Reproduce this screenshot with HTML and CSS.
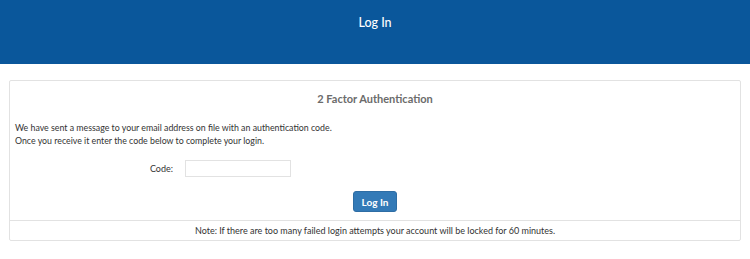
FILE: index.html
```html
<!DOCTYPE html>
<html lang="en">
<head>
    <meta charset="UTF-8">
    <title>Log In</title>
    <link rel="stylesheet" href="styles.css">
</head>
<body>
    <!-- Top Bar -->
    <header class="top-bar">
        <h1>Log In</h1>
    </header>

    <!-- 2FA Panel -->
    <main class="auth-panel">
        <h2>2 Factor Authentication</h2>
        <p class="intro">
            We have sent a message to your email address on file with an authentication code.<br>
            Once you receive it enter the code below to complete your login.
        </p>
        <form class="code-form" onsubmit="return false">
            <div class="code-row">
                <label for="code">Code:</label>
                <input type="text" id="code">
            </div>
            <div class="submit-row">
                <button type="submit">Log In</button>
            </div>
        </form>
        <div class="note">Note: If there are too many failed login attempts your account will be locked for 60 minutes.</div>
    </main>
</body>
</html>
```

FILE: styles.css
```css
:root {
    --color-brand: #0a579b;
    --color-button: #337ab7;
    --color-border: #e2e2e2;
    --color-text: #333;
    --color-heading: #6b6b6b;
}

body {
    margin: 0;
    font-family: Lato, "Open Sans", sans-serif;
    color: var(--color-text);
    background: #fff;
}

/* Top Bar */
.top-bar {
    background: var(--color-brand);
    height: 64px;
    display: flex;
    justify-content: center;
    padding-top: 14px;
    box-sizing: border-box;
}

.top-bar h1 {
    margin: 0;
    color: #fff;
    font-size: 12.5px;
    font-weight: 500;
    line-height: 18px;
}

/* 2FA Panel */
.auth-panel {
    margin: 16px 9px 0;
    border: 1px solid var(--color-border);
    border-radius: 2px;
}

.auth-panel h2 {
    margin: 0;
    padding: 10px 0 0;
    text-align: center;
    font-size: 11px;
    font-weight: 700;
    line-height: 16px;
    color: var(--color-heading);
}

.intro {
    margin: 14px 5px 0;
    font-size: 8.8px;
    line-height: 13px;
}

.code-row {
    display: flex;
    align-items: center;
    margin-top: 13px;
}

.code-row label {
    width: 163px;
    text-align: right;
    font-size: 9px;
}

.code-row input {
    margin-left: 12px;
    width: 106px;
    height: 17px;
    box-sizing: border-box;
    border: 1px solid var(--color-border);
    padding: 0 4px;
}

.submit-row {
    display: flex;
    justify-content: center;
    margin-top: 14px;
    padding-bottom: 8px;
}

.submit-row button {
    background: var(--color-button);
    color: #fff;
    border: 1px solid #2e6da4;
    border-radius: 3px;
    font-family: inherit;
    font-size: 10px;
    font-weight: 700;
    height: 21px;
    padding: 0 8px;
}

.note {
    border-top: 1px solid var(--color-border);
    text-align: center;
    font-size: 9px;
    line-height: 19px;
}
```
